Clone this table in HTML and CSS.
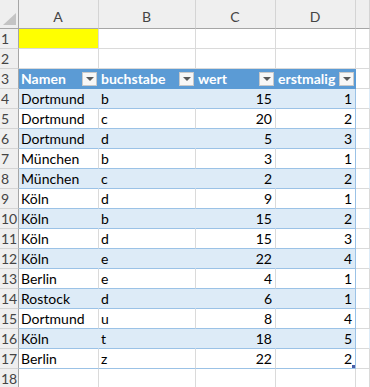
FILE: index.html
```html
<!DOCTYPE html>
<html lang="de">
<head>
<meta charset="UTF-8">
<meta name="viewport" content="width=device-width, initial-scale=1.0">
<title>Tabelle1</title>
<link rel="stylesheet" href="styles.css">
</head>
<body>

<div class="sheet">

    <!-- Spaltenköpfe -->
    <div class="row head">
        <div class="corner"><span class="dreieck"></span></div>
        <div>A</div><div>B</div><div>C</div><div>D</div><div></div>
    </div>

    <div class="row">
        <div class="rh">1</div>
        <div class="gelb"></div><div></div><div></div><div></div><div></div>
    </div>

    <div class="row">
        <div class="rh">2</div>
        <div></div><div></div><div></div><div></div><div></div>
    </div>

    <!-- Tabelle startet hier -->
    <div class="row titel">
        <div class="rh">3</div>
        <div class="th">Namen<span class="filter"></span></div>
        <div class="th">buchstabe<span class="filter"></span></div>
        <div class="th">wert<span class="filter"></span></div>
        <div class="th last">erstmalig<span class="filter"></span></div>
        <div class="leer"></div>
    </div>

    <div class="row tab band">
        <div class="rh">4</div>
        <div>Dortmund</div><div>b</div><div class="num">15</div><div class="num last">1</div><div class="leer"></div>
    </div>
    <div class="row tab">
        <div class="rh">5</div>
        <div>Dortmund</div><div>c</div><div class="num">20</div><div class="num last">2</div><div class="leer"></div>
    </div>
    <div class="row tab band">
        <div class="rh">6</div>
        <div>Dortmund</div><div>d</div><div class="num">5</div><div class="num last">3</div><div class="leer"></div>
    </div>
    <div class="row tab">
        <div class="rh">7</div>
        <div>München</div><div>b</div><div class="num">3</div><div class="num last">1</div><div class="leer"></div>
    </div>
    <div class="row tab band">
        <div class="rh">8</div>
        <div>München</div><div>c</div><div class="num">2</div><div class="num last">2</div><div class="leer"></div>
    </div>
    <div class="row tab">
        <div class="rh">9</div>
        <div>Köln</div><div>d</div><div class="num">9</div><div class="num last">1</div><div class="leer"></div>
    </div>
    <div class="row tab band">
        <div class="rh">10</div>
        <div>Köln</div><div>b</div><div class="num">15</div><div class="num last">2</div><div class="leer"></div>
    </div>
    <div class="row tab">
        <div class="rh">11</div>
        <div>Köln</div><div>d</div><div class="num">15</div><div class="num last">3</div><div class="leer"></div>
    </div>
    <div class="row tab band">
        <div class="rh">12</div>
        <div>Köln</div><div>e</div><div class="num">22</div><div class="num last">4</div><div class="leer"></div>
    </div>
    <div class="row tab">
        <div class="rh">13</div>
        <div>Berlin</div><div>e</div><div class="num">4</div><div class="num last">1</div><div class="leer"></div>
    </div>
    <div class="row tab band">
        <div class="rh">14</div>
        <div>Rostock</div><div>d</div><div class="num">6</div><div class="num last">1</div><div class="leer"></div>
    </div>
    <div class="row tab">
        <div class="rh">15</div>
        <div>Dortmund</div><div>u</div><div class="num">8</div><div class="num last">4</div><div class="leer"></div>
    </div>
    <div class="row tab band">
        <div class="rh">16</div>
        <div>Köln</div><div>t</div><div class="num">18</div><div class="num last">5</div><div class="leer"></div>
    </div>
    <div class="row tab">
        <div class="rh">17</div>
        <div>Berlin</div><div>z</div><div class="num">22</div><div class="num last ende">2<span class="griff"></span></div><div class="leer"></div>
    </div>

    <div class="row">
        <div class="rh">18</div>
        <div></div><div></div><div></div><div></div><div></div>
    </div>

</div>

</body>
</html>
```

FILE: styles.css
```css
body{margin: 0;
    background-color: #ffffff;
    overflow: hidden;}

.sheet{display: grid;
    grid-template-columns: 19px 80px 97px 80px 80px 1fr;
    grid-template-rows: 29px;
    grid-auto-rows: 20px;
    width: 370px;
    font-family: Lato, "Liberation Sans", sans-serif;
    font-size: 14px;
    color: #000000;}

.row{display: contents;}

.row > div{box-sizing: border-box;
    border-right: 1px solid #dadada;
    border-bottom: 1px solid #dadada;
    padding: 1px 3px 0 2px;
    line-height: 18px;
    white-space: nowrap;
    overflow: hidden;
    position: relative;}

/* Kopfzeile mit A B C D */
.head > div{background-color: #efefef;
    color: #444444;
    text-align: center;
    line-height: 16px;
    padding-top: 9px;
    border-bottom-color: #a6a6a6;
    border-right-color: #d4d4d4;}

.corner{border-right-color: #a6a6a6 !important;}

.dreieck{position: absolute;
    right: 2px;
    bottom: 3px;
    width: 0;
    height: 0;
    border-left: 13px solid transparent;
    border-bottom: 12px solid #c4c4c4;}

.row > .rh{background-color: #efefef;
    color: #444444;
    border-right-color: #a6a6a6;
    border-bottom-color: #d4d4d4;
    padding: 0 0 0 1px;
    line-height: 19px;}

.gelb{background-color: #ffff00;}

/* Tabellenkopf */
.row > .th{background-color: #5b9bd5;
    color: #ffffff;
    font-weight: bold;
    border-right-color: #5b9bd5;
    border-bottom-color: #5b9bd5;
    display: flex;
    align-items: center;
    padding: 0 1px 0 2px;}

.filter{margin-left: auto;
    width: 15px;
    height: 14px;
    box-sizing: border-box;
    border: 1px solid #c9c9c9;
    background-color: #f7f7f7;
    display: flex;
    align-items: center;
    justify-content: center;}

.filter::after{content: "";
    width: 0;
    height: 0;
    border-left: 4px solid transparent;
    border-right: 4px solid transparent;
    border-top: 4px solid #595959;}

.tab > div{border-bottom-color: #9bc2e6;}

.band > div{background-color: #ddebf7;
    border-right-color: #ddebf7;}

.tab > .rh{border-bottom-color: #d4d4d4;}

.row > .last{border-right-color: #9bc2e6;}

.row > .th.last{border-right-color: #5b9bd5;}

.row > .leer{background-color: #ffffff;
    border-bottom-color: #dadada;}

.num{text-align: right;}

.griff{position: absolute;
    right: 0;
    bottom: 0;
    width: 3px;
    height: 3px;
    background-color: #4a5fa8;}
```
